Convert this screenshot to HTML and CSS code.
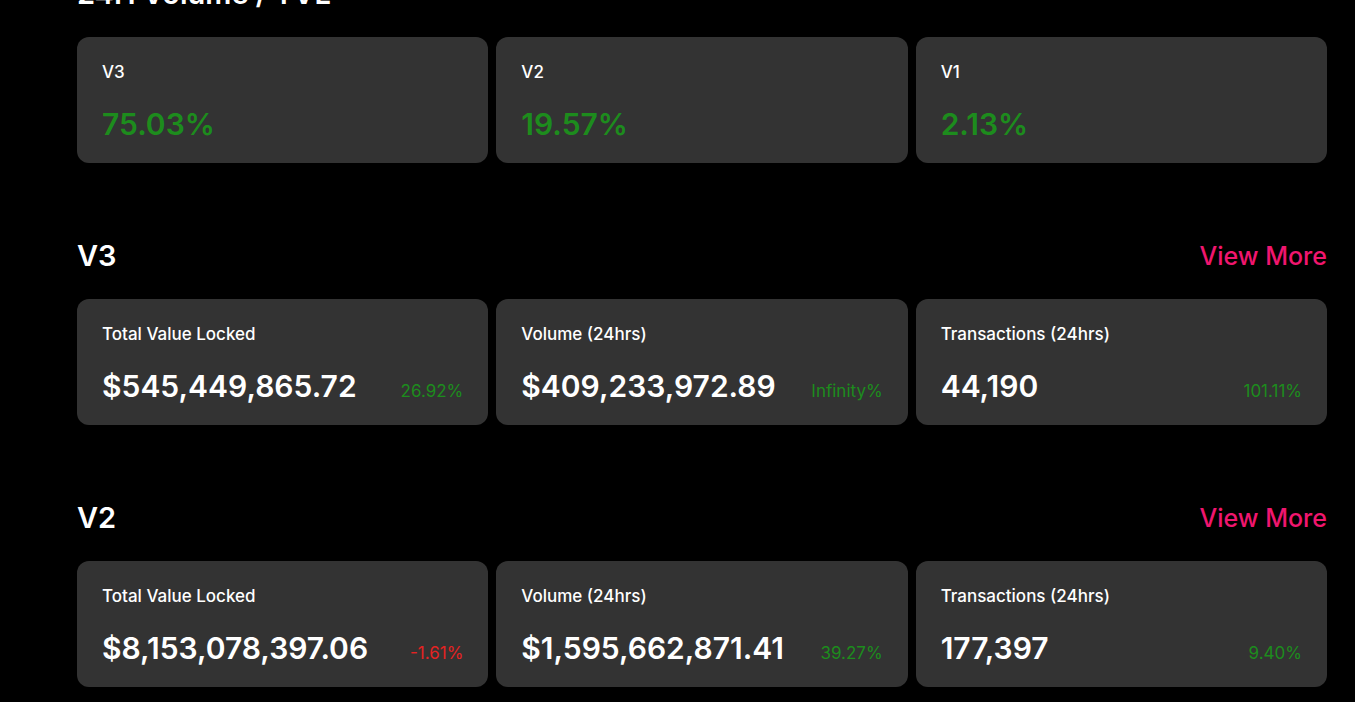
FILE: index.html
```html
<!DOCTYPE html>
<html lang="en">
<head>
    <meta charset="UTF-8">
    <meta name="viewport" content="width=device-width, initial-scale=1.0">
    <title>Protocol Overview</title>
    <link rel="stylesheet" href="styles.css">
</head>
<body>
    <div class="page">
        <!-- Volume / TVL share -->
        <section class="section">
            <div class="section-head">
                <h2 class="section-title">24H Volume / TVL</h2>
            </div>
            <div class="cards">
                <div class="card">
                    <div class="card-label">V3</div>
                    <div class="share">75.03%</div>
                </div>
                <div class="card">
                    <div class="card-label">V2</div>
                    <div class="share">19.57%</div>
                </div>
                <div class="card">
                    <div class="card-label">V1</div>
                    <div class="share">2.13%</div>
                </div>
            </div>
        </section>

        <!-- V3 -->
        <section class="section">
            <div class="section-head">
                <h2 class="section-title">V3</h2>
                <a class="view-more" href="#">View More</a>
            </div>
            <div class="cards">
                <div class="card">
                    <div class="card-label">Total Value Locked</div>
                    <div class="stat-row">
                        <span class="stat-value">$545,449,865.72</span>
                        <span class="change up">26.92%</span>
                    </div>
                </div>
                <div class="card">
                    <div class="card-label">Volume (24hrs)</div>
                    <div class="stat-row">
                        <span class="stat-value">$409,233,972.89</span>
                        <span class="change up">Infinity%</span>
                    </div>
                </div>
                <div class="card">
                    <div class="card-label">Transactions (24hrs)</div>
                    <div class="stat-row">
                        <span class="stat-value">44,190</span>
                        <span class="change up">101.11%</span>
                    </div>
                </div>
            </div>
        </section>

        <!-- V2 -->
        <section class="section">
            <div class="section-head">
                <h2 class="section-title">V2</h2>
                <a class="view-more" href="#">View More</a>
            </div>
            <div class="cards">
                <div class="card">
                    <div class="card-label">Total Value Locked</div>
                    <div class="stat-row">
                        <span class="stat-value">$8,153,078,397.06</span>
                        <span class="change down">-1.61%</span>
                    </div>
                </div>
                <div class="card">
                    <div class="card-label">Volume (24hrs)</div>
                    <div class="stat-row">
                        <span class="stat-value">$1,595,662,871.41</span>
                        <span class="change up">39.27%</span>
                    </div>
                </div>
                <div class="card">
                    <div class="card-label">Transactions (24hrs)</div>
                    <div class="stat-row">
                        <span class="stat-value">177,397</span>
                        <span class="change up">9.40%</span>
                    </div>
                </div>
            </div>
        </section>
    </div>
</body>
</html>
```

FILE: styles.css
```css
/* Reset */
* {
    margin: 0;
    padding: 0;
    box-sizing: border-box;
}

body {
    font-family: 'Inter', 'Noto Sans', sans-serif;
    background: #000;
    color: #fff;
    overflow: hidden;
}

/* page is shown scrolled a little, the first heading sits under the top edge */
.page {
    width: 1250px;
    margin-left: 77px;
    margin-top: -23px;
}

.section {
    margin-bottom: 76px;
}

.section-head {
    display: flex;
    justify-content: space-between;
    align-items: center;
    height: 34px;
    margin-bottom: 26px;
}

.section-title {
    font-size: 29px;
    font-weight: 600;
    line-height: 34px;
}

.view-more {
    color: #f0166e;
    font-size: 25px;
    font-weight: 500;
    text-decoration: none;
}

/* Cards */
.cards {
    display: grid;
    grid-template-columns: repeat(3, 1fr);
    gap: 8px;
}

.card {
    height: 126px;
    background: #333;
    border-radius: 12px;
    padding: 24px 25px 0 25px;
    display: flex;
    flex-direction: column;
    gap: 23px;
}

.card-label {
    font-size: 17px;
    font-weight: 500;
    line-height: 22px;
}

.share {
    color: #1d8c1d;
    font-size: 30px;
    font-weight: 600;
    line-height: 36px;
}

.stat-row {
    display: flex;
    justify-content: space-between;
    align-items: baseline;
    line-height: 36px;
}

.stat-value {
    font-size: 30px;
    font-weight: 600;
}

.change {
    font-size: 17px;
}

.change.up {
    color: #1d8c1d;
}

.change.down {
    color: #e52222;
}
```
